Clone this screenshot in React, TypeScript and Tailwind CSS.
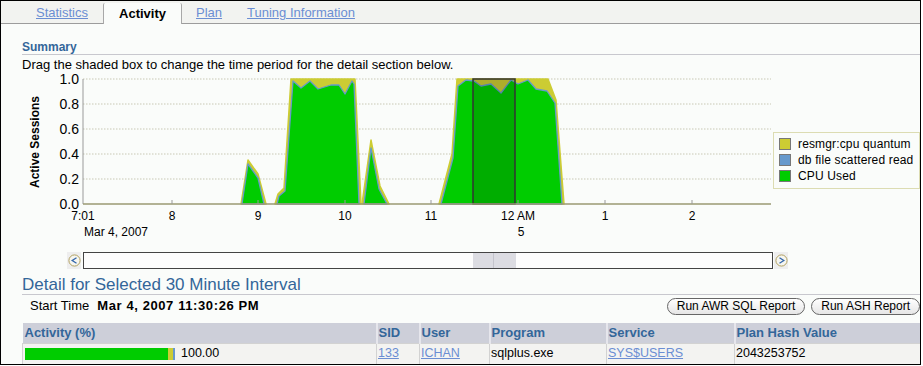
import React from 'react';

const yGrid = [
    { v: '1.0', y: 79 },
    { v: '0.8', y: 104 },
    { v: '0.6', y: 129 },
    { v: '0.4', y: 154 },
    { v: '0.2', y: 179 },
    { v: '0.0', y: 204 },
];

const xTicks = [
    { x: 82, l: '7:01' },
    { x: 171, l: '8' },
    { x: 257, l: '9' },
    { x: 344, l: '10' },
    { x: 430, l: '11' },
    { x: 517, l: '12 AM' },
    { x: 604, l: '1' },
    { x: 691, l: '2' },
];

// total (resmgr on top) and cpu used outlines, page coords
const yellowAreas = [
    '240,204 247,160 257,174 265,204',
    '274,204 277,194 283,188 290,79 354,79 360,204',
    '361,204 370,140 379,186 388,204',
    '438,204 451,154 456,79 547,79 555,100 563,204',
];

const greenAreas = [
    '241,204 247,164 257,178 263,204',
    '276,204 278,196 284,191 292,81 300,88 309,81 317,89 330,85 338,85 344,94 351,81 353,84 358,204',
    '363,204 370,148 378,189 386,204',
    '440,204 452,158 457,86 465,80 473,81 480,86 490,84 500,93 510,80 517,84 527,80 535,89 546,91 554,103 561,204',
];

const legend = [
    { label: 'resmgr:cpu quantum', color: 'bg-[#cccc33]' },
    { label: 'db file scattered read', color: 'bg-[#6699cc]' },
    { label: 'CPU Used', color: 'bg-[#00cc00]' },
];

const ScrollBtn = ({ dir }: { dir: 'l' | 'r' }) => (
    <div className="flex h-[17px] w-[14px] items-center justify-center bg-[#eeeeee]">
        <svg width="13" height="13" viewBox="0 0 13 13">
            <circle cx="6.5" cy="6.5" r="5.6" fill="#f6f6f0" stroke="#b0a060" strokeWidth="1" />
            {dir === 'l' ? (
                <polyline points="8.5,3.8 4.2,6.5 8.5,9.2" fill="none" stroke="#3366aa" strokeWidth="1.3" />
            ) : (
                <polyline points="4.5,3.8 8.8,6.5 4.5,9.2" fill="none" stroke="#3366aa" strokeWidth="1.3" />
            )}
        </svg>
    </div>
);

const Chart = () => (
    <svg width="751" height="172" viewBox="21 72 751 172" className="block shrink-0">
        {yGrid.slice(0, 5).map((g) => (
            <line key={g.v} x1="82" x2="770" y1={g.y} y2={g.y} stroke="#c8c8b4" strokeWidth="1" strokeDasharray="1.5 1.5" />
        ))}
        {yellowAreas.map((p, i) => (
            <polygon key={i} points={p} fill="#cccc33" stroke="#cccc33" strokeWidth="1.5" strokeLinejoin="round" />
        ))}
        {greenAreas.map((p, i) => (
            <polygon key={i} points={p} fill="#00cc00" stroke="#6699cc" strokeWidth="1.3" strokeLinejoin="round" />
        ))}
        <rect x="472" y="79" width="42" height="125" fill="rgba(0,0,0,0.15)" stroke="#333" strokeWidth="1.5" />
        <line x1="82" x2="82" y1="79" y2="204" stroke="#9a9a9a" strokeWidth="1" />
        <line x1="82" x2="770" y1="204" y2="204" stroke="#9a9a72" strokeWidth="1.6" />
        {xTicks.slice(1).map((t) => (
            <line key={t.l} x1={t.x} x2={t.x} y1="200" y2="204" stroke="#9a9a9a" strokeWidth="1" />
        ))}
        <g fontFamily="'Liberation Sans', Arial, sans-serif" fill="#000">
            {yGrid.map((g) => (
                <text key={g.v} x="78" y={g.y + 5} fontSize="14" textAnchor="end">
                    {g.v}
                </text>
            ))}
            {xTicks.map((t) => (
                <text key={t.l} x={t.x} y="220" fontSize="12" textAnchor="middle">
                    {t.l}
                </text>
            ))}
            <text x="83" y="236" fontSize="12">Mar 4, 2007</text>
            <text x="520" y="236" fontSize="12" textAnchor="middle">5</text>
            <text transform="translate(38,142) rotate(-90)" fontSize="12" fontWeight="bold" textAnchor="middle">
                Active Sessions
            </text>
        </g>
    </svg>
);

export default function App() {
    return (
        <div className="bg-white font-['Liberation_Sans',Arial,sans-serif] text-black">
            <div className="h-[365px] w-[921px] overflow-hidden border border-black bg-[#fafcfa]">
                {/* tabs */}
                <div className="flex h-[23px] items-stretch border-b border-[#9c9c9c] bg-[#f2f3f0] pl-[35px] text-[13px]">
                    <a className="mt-px self-center text-[#6b8ed3] underline">Statistics</a>
                    <div className="relative -mb-px ml-[15px] mt-[2px] flex w-[79px] items-center justify-center rounded-t-[2px] border-x border-[#a8a8a8] bg-[#fafcfa] font-bold">
                        Activity
                    </div>
                    <a className="ml-[14px] mt-px self-center text-[#6b8ed3] underline">Plan</a>
                    <a className="ml-[25px] mt-px self-center text-[#6b8ed3] underline">Tuning Information</a>
                </div>

                <div className="pl-[21px]">
                    <div className="mt-[16px] border-b border-[#c8c8ce] text-[12px] font-bold leading-[14px] text-[#336699]">
                        Summary
                    </div>
                    <div className="mt-[3px] text-[13px] leading-[14px]">
                        Drag the shaded box to change the time period for the detail section below.
                    </div>

                    <div className="flex">
                        <Chart />
                        <div className="mt-[60px] h-[57px] flex-1 border border-[#dcdcb2] pl-[5px] pt-[4px]">
                            {legend.map((l) => (
                                <div key={l.label} className="flex h-[16px] items-start">
                                    <div className={`mt-px h-[12px] w-[12px] border border-[#777] ${l.color}`} />
                                    <span className="ml-[7px] text-[12px] leading-[14px] tracking-[0.15px]">{l.label}</span>
                                </div>
                            ))}
                        </div>
                    </div>

                    <div className="mt-[8px] flex items-center pl-[45px]">
                        <ScrollBtn dir="l" />
                        <div className="relative ml-[2px] h-[17px] w-[690px] border border-[#444] bg-[#fdfdfd]">
                            <div className="absolute inset-y-0 left-[389px] flex w-[43px] bg-[#dcdce2]">
                                <div className="w-[21px] border-r border-[#c4c4cc]" />
                            </div>
                        </div>
                        <div className="ml-px">
                            <ScrollBtn dir="r" />
                        </div>
                    </div>

                    <div className="mt-[7px] border-b border-[#c8c8ce] text-[17px] leading-[18px] text-[#336699]">
                        Detail for Selected 30 Minute Interval
                    </div>

                    <div className="mt-px flex h-[20px] items-center">
                        <span className="pl-[8px] text-[13px]">Start Time</span>
                        <span className="ml-[8px] text-[13px] font-bold tracking-[0.6px]">Mar 4, 2007 11:30:26 PM</span>
                        <div className="ml-auto flex gap-[6px]">
                            <button className="h-[17px] rounded-full border border-[#666] bg-gradient-to-b from-white to-[#e6e6e6] px-[9px] text-[12px] leading-[15px]">
                                Run AWR SQL Report
                            </button>
                            <button className="h-[17px] rounded-full border border-[#666] bg-gradient-to-b from-white to-[#e6e6e6] px-[9px] text-[12px] leading-[15px]">
                                Run ASH Report
                            </button>
                        </div>
                    </div>

                    <table className="mt-[7px] w-[899px] table-fixed border-collapse text-left">
                        <colgroup>
                            <col className="w-[354px]" />
                            <col className="w-[43px]" />
                            <col className="w-[70px]" />
                            <col className="w-[117px]" />
                            <col className="w-[128px]" />
                            <col className="w-[187px]" />
                        </colgroup>
                        <thead>
                            <tr className="h-[19px] bg-[#cdcfd9] text-[13px] font-bold text-[#336699]">
                                <th className="pl-[2px] font-bold">Activity (%)</th>
                                <th className="border-l-2 border-[#e6e6ec] pl-[1px] font-bold">SID</th>
                                <th className="border-l-2 border-[#e6e6ec] pl-[1px] font-bold">User</th>
                                <th className="border-l-2 border-[#e6e6ec] pl-[1px] font-bold">Program</th>
                                <th className="border-l-2 border-[#e6e6ec] pl-[1px] font-bold">Service</th>
                                <th className="border-l-2 border-[#e6e6ec] pl-[1px] font-bold">Plan Hash Value</th>
                            </tr>
                        </thead>
                        <tbody>
                            <tr className="h-[21px] bg-[#f3f3f1] text-[12.5px]">
                                <td className="border border-[#d2d2d2] pl-[2px]">
                                    <div className="flex items-center">
                                        <div className="h-[12px] w-[143px] bg-[#00cc00]" />
                                        <div className="h-[12px] w-[5px] bg-[#cccc33]" />
                                        <div className="h-[12px] w-[2px] bg-[#6699cc]" />
                                        <span className="ml-[6px]">100.00</span>
                                    </div>
                                </td>
                                <td className="border border-[#d2d2d2] pl-[1px]">
                                    <a className="text-[#6b8ed3] underline">133</a>
                                </td>
                                <td className="border border-[#d2d2d2] pl-[1px]">
                                    <a className="text-[#6b8ed3] underline">ICHAN</a>
                                </td>
                                <td className="border border-[#d2d2d2] pl-[1px]">sqlplus.exe</td>
                                <td className="border border-[#d2d2d2] pl-[1px]">
                                    <a className="text-[#6b8ed3] underline">SYS$USERS</a>
                                </td>
                                <td className="border border-[#d2d2d2] pl-[1px]">2043253752</td>
                            </tr>
                        </tbody>
                    </table>
                </div>
            </div>
        </div>
    );
}
